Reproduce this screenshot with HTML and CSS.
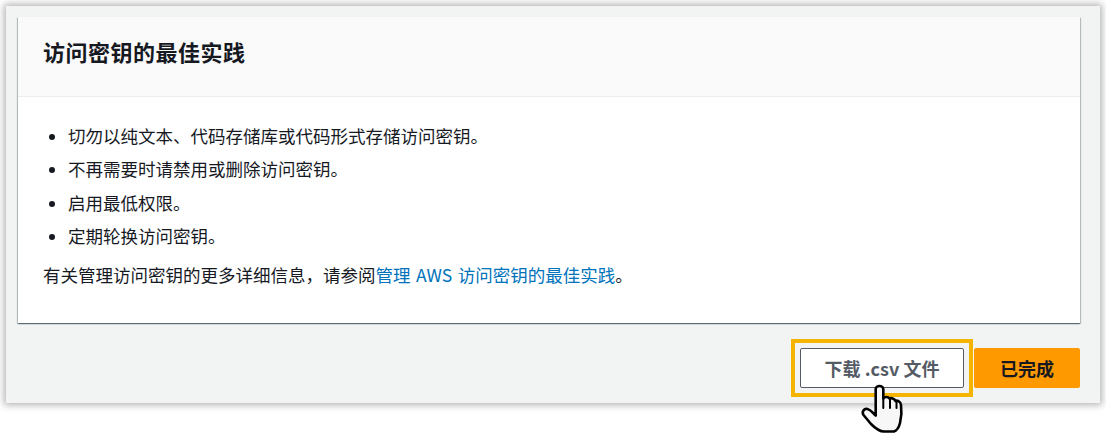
FILE: index.html
```html
<!DOCTYPE html>
<html lang="zh-CN">
<head>
<meta charset="utf-8">
<title>访问密钥的最佳实践</title>
<link rel="stylesheet" href="styles.css">
</head>
<body>
<div class="panel">
  <section class="card">
    <header class="card-header"><h2>访问密钥的最佳实践</h2></header>
    <div class="card-body">
      <ul class="tips">
        <li>切勿以纯文本、代码存储库或代码形式存储访问密钥。</li>
        <li>不再需要时请禁用或删除访问密钥。</li>
        <li>启用最低权限。</li>
        <li>定期轮换访问密钥。</li>
      </ul>
      <p class="more">有关管理访问密钥的更多详细信息，请参阅<a href="#">管理 AWS 访问密钥的最佳实践</a>。</p>
    </div>
  </section>
  <div class="actions">
    <button class="btn btn-download">下载 .csv 文件</button>
    <button class="btn btn-done">已完成</button>
  </div>
</div>
<svg class="cursor" width="46" height="49" viewBox="0 0 46 49" aria-hidden="true">
  <path d="M15.700 5C15.700 1 23.300 1 23.300 5V14.500C24.500 12.500 28 12.500 29.500 14.500C31 13.500 34.500 14.500 35.500 17C37 16 41 17.500 41 21C42 28 41.500 33 40 39C39 43 37 46.500 34 47.500H24C20 47.500 14 43 11 40L3.500 31C1.500 28 4 24 7.500 25C11 26 13 29 15.700 31.500Z" fill="#f7f7f7" stroke="#000" stroke-width="2.600" stroke-linejoin="round"/>
  <path d="M23.300 14V24M30 15V24M36.500 18V24" fill="none" stroke="#000" stroke-width="2" stroke-linecap="round"/>
</svg>
</body>
</html>
```
FILE: styles.css
```css
* { box-sizing: border-box; }
html, body { margin: 0; padding: 0; background: #fff; }
body {
  width: 1106px;
  height: 433px;
  overflow: hidden;
  padding: 6px 0 0 6px;
  position: relative;
  font-family: "Noto Sans CJK SC", "Noto Sans", sans-serif;
  color: #16191f;
}
.panel {
  width: 1094px;
  height: 397px;
  padding: 11px 20px 0 12px;
  background: #f2f3f3;
  box-shadow: 0 0 7px 2px rgba(0, 0, 0, .3);
}
.card {
  height: 306px;
  background: #fff;
  box-shadow: 0 1px 1px 0 rgba(0, 28, 36, .4), 1px 1px 1px 0 rgba(0, 28, 36, .2), -1px 1px 1px 0 rgba(0, 28, 36, .2);
}
.card-header {
  height: 80px;
  padding: 0 25px 12px;
  display: flex;
  align-items: center;
  background: #fafafa;
  border-bottom: 1px solid #eaeded;
}
.card-header h2 {
  margin: 0;
  font-size: 22px;
  font-weight: 700;
  line-height: 30px;
  letter-spacing: .5px;
}
.card-body {
  padding: 22px 25px 0;
  font-size: 17.500px;
  line-height: 33.400px;
}
.tips {
  margin: 0;
  padding: 0 0 0 25px;
}
.tips li::marker { font-size: 16px; }
.more { margin: 5px 0 0; }
.more a { color: #0073bb; text-decoration: none; word-spacing: 1.500px; }
.actions {
  display: flex;
  justify-content: flex-end;
  gap: 10px;
  padding-top: 25px;
}
.btn {
  height: 40px;
  border-radius: 2px;
  font-family: inherit;
  font-size: 18px;
  font-weight: 700;
  padding: 0;
}
.btn-download {
  position: relative;
  width: 164px;
  background: #fff;
  color: #545b64;
  border: 1px solid #545b64;
}
.btn-download::after {
  content: "";
  position: absolute;
  inset: -10px;
  border: 4px solid #f5b400;
}
.btn-done {
  width: 106px;
  background: #ff9900;
  color: #16191f;
  border: 1px solid #ff9900;
}
.cursor {
  position: absolute;
  left: 860px;
  top: 384px;
}
```
